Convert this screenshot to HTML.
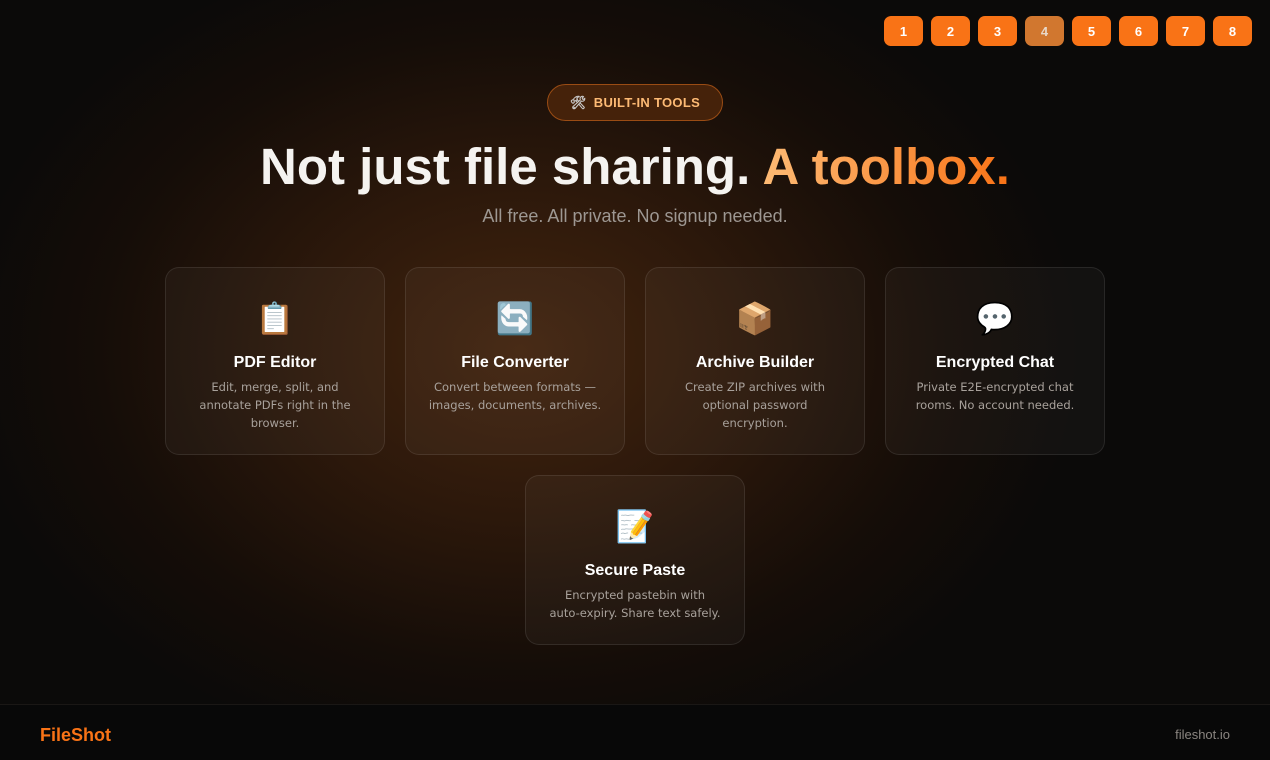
<!DOCTYPE html>
<html><head><meta charset="utf-8"><style>
*{margin:0;padding:0;box-sizing:border-box}
body{width:1270px;height:760px;overflow:hidden;font-family:"Liberation Sans","DejaVu Sans",sans-serif;background:#0b0908;position:relative}
.bg{position:absolute;left:0;top:0;width:1270px;height:704px;background:radial-gradient(ellipse 560px 420px at 520px 350px,#42240e 0%,#2c180b 40%,#150d08 75%,#0b0a09 100%)}
.nav{position:absolute;top:16px;left:884px;display:flex;gap:8px}
.nav div{width:39px;height:30px;border-radius:7px;background:#f97316;color:#fff;font-weight:bold;font-size:13px;display:flex;align-items:center;justify-content:center}
.nav div.a{background:#d1772f;color:#e8d8c8}
.badge{position:absolute;left:547px;top:84px;width:176px;height:37px;border:1px solid #9a4c14;border-radius:19px;background:#45220a;color:#fdba74;font-weight:bold;font-size:13px;display:flex;align-items:center;justify-content:center;gap:7px;letter-spacing:.3px}
h1{position:absolute;top:137px;left:0;width:1270px;text-align:center;font-size:51px;font-weight:900;color:#f5f3f0;letter-spacing:0}
h1 span{background:linear-gradient(90deg,#fdba74,#f97316);-webkit-background-clip:text;color:transparent}
.sub{position:absolute;top:206px;width:1270px;text-align:center;color:#9d9792;font-size:18px}
.card{position:absolute;width:220px;height:188px;border:1px solid rgba(255,255,255,.09);border-radius:14px;background:rgba(255,255,255,.035);text-align:center}
.card .ic{position:absolute;top:33px;width:100%;font-size:31px;line-height:36px}
.card h3{position:absolute;top:86px;width:100%;color:#fff;font-size:16px;font-weight:bold}
.card p{position:absolute;top:110px;left:28px;right:28px;color:#a8a19b;font-family:"DejaVu Sans",sans-serif;font-size:11.5px;line-height:18px}
.foot{position:absolute;left:0;top:704px;width:1270px;height:56px;background:#080808;border-top:1px solid #1a1715}
.logo{position:absolute;left:40px;top:20px;color:#f97316;font-weight:bold;font-size:18px}
.url{position:absolute;right:40px;top:22px;color:#8a8580;font-size:13px}
</style></head><body>
<div class="bg"></div>
<div class="nav"><div>1</div><div>2</div><div>3</div><div class="a">4</div><div>5</div><div>6</div><div>7</div><div>8</div></div>
<div class="badge"><span style="color:#ccc">🛠</span>BUILT-IN TOOLS</div>
<h1>Not just file sharing. <span>A toolbox.</span></h1>
<div class="sub">All free. All private. No signup needed.</div>

<div class="card" style="left:165px;top:267px"><div class="ic">📋</div><h3>PDF Editor</h3><p>Edit, merge, split, and annotate PDFs right in the browser.</p></div>
<div class="card" style="left:405px;top:267px"><div class="ic">🔄</div><h3>File Converter</h3><p style="left:20px;right:20px">Convert between formats — images, documents, archives.</p></div>
<div class="card" style="left:645px;top:267px"><div class="ic">📦</div><h3>Archive Builder</h3><p>Create ZIP archives with optional password encryption.</p></div>
<div class="card" style="left:885px;top:267px"><div class="ic">💬</div><h3>Encrypted Chat</h3><p>Private E2E-encrypted chat rooms. No account needed.</p></div>
<div class="card" style="left:525px;top:475px;height:170px"><div class="ic">📝</div><h3>Secure Paste</h3><p style="left:10px;right:10px">Encrypted pastebin with<br>auto-expiry. Share text safely.</p></div>

<div class="foot"><div class="logo">FileShot</div><div class="url">fileshot.io</div></div>
</body></html>
